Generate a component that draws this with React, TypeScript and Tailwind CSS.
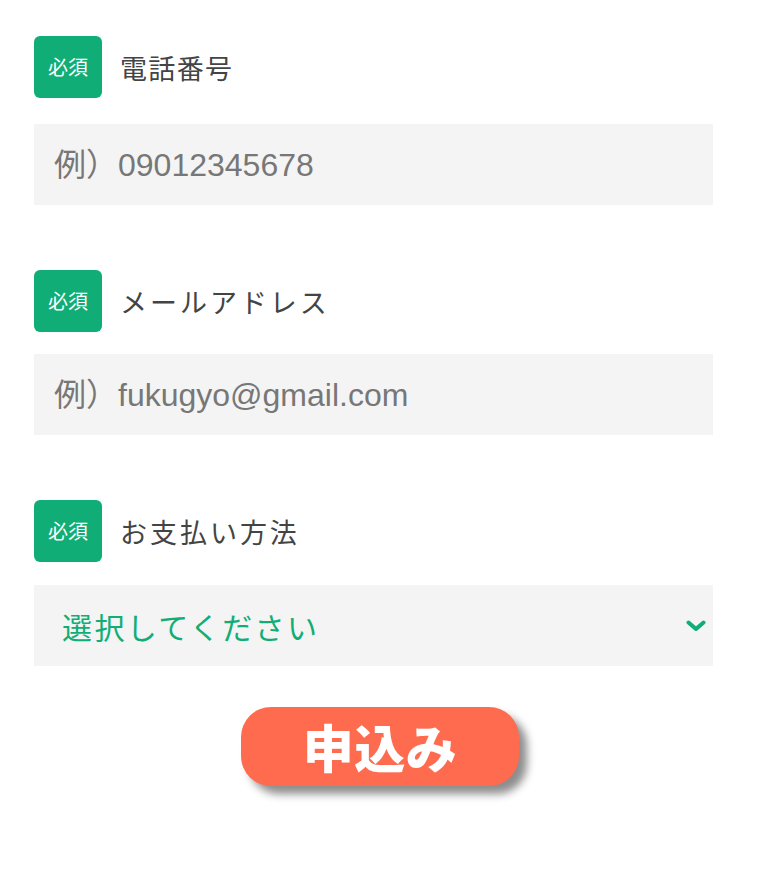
import React from "react";

const jp = '"Noto Sans CJK JP", "Noto Sans", sans-serif';

function Badge() {
  return (
    <div
      className="flex h-[62px] w-[68px] shrink-0 items-center justify-center rounded-[6px] bg-[#10ae76] text-[20px] text-white"
      style={{ fontFamily: jp }}
    >
      必須
    </div>
  );
}

function Label({ text, tracking }: { text: string; tracking: string }) {
  return (
    <div className="flex items-center gap-[18px]">
      <Badge />
      <span className={`text-[27px] leading-none text-[#444] ${tracking}`} style={{ fontFamily: jp }}>
        {text}
      </span>
    </div>
  );
}

function Field({ placeholder, mt }: { placeholder: string; mt: string }) {
  return (
    <div className={`${mt} flex h-[81px] items-center bg-[#f4f4f4] pl-[20px]`}>
      <span
        className="text-[32px] leading-none text-[#777]"
        style={{ fontFamily: '"Liberation Sans", "Noto Sans CJK JP", sans-serif' }}
      >
        {placeholder}
      </span>
    </div>
  );
}

export default function App() {
  return (
    <div className="min-h-[873px] w-[760px] bg-white pl-[34px] pr-[47px] pt-[36px]">
      <Label text="電話番号" tracking="tracking-[0.05em]" />
      <Field placeholder="例）09012345678" mt="mt-[26px]" />

      <div className="mt-[65px]">
        <Label text="メールアドレス" tracking="tracking-[0.11em]" />
      </div>
      <Field placeholder="例）fukugyo@gmail.com" mt="mt-[22px]" />

      <div className="mt-[65px]">
        <Label text="お支払い方法" tracking="tracking-[0.11em]" />
      </div>
      <div className="mt-[23px] flex h-[81px] items-center justify-between bg-[#f4f4f4] pl-[28px] pr-[6px]">
        <span className="text-[30px] leading-none tracking-[0.08em] text-[#10ae76]" style={{ fontFamily: jp }}>
          選択してください
        </span>
        <svg width="20" height="12" viewBox="0 0 20 12" className="mr-[1px] mt-[1px]">
          <path d="M2.5 2.5 L10 9 L17.5 2.5" fill="none" stroke="#10ae76" strokeWidth="4" strokeLinecap="round" strokeLinejoin="round" />
        </svg>
      </div>

      <div className="mt-[41px] flex justify-center pl-[13px]">
        <button
          className="flex h-[79px] w-[278px] items-center justify-center rounded-[30px] bg-[#ff6b4e] text-[51px] font-black leading-none tracking-[0.01em] text-white shadow-[8px_8px_8px_rgba(0,0,0,0.45)]"
          style={{ fontFamily: jp }}
        >
          申込み
        </button>
      </div>
    </div>
  );
}
